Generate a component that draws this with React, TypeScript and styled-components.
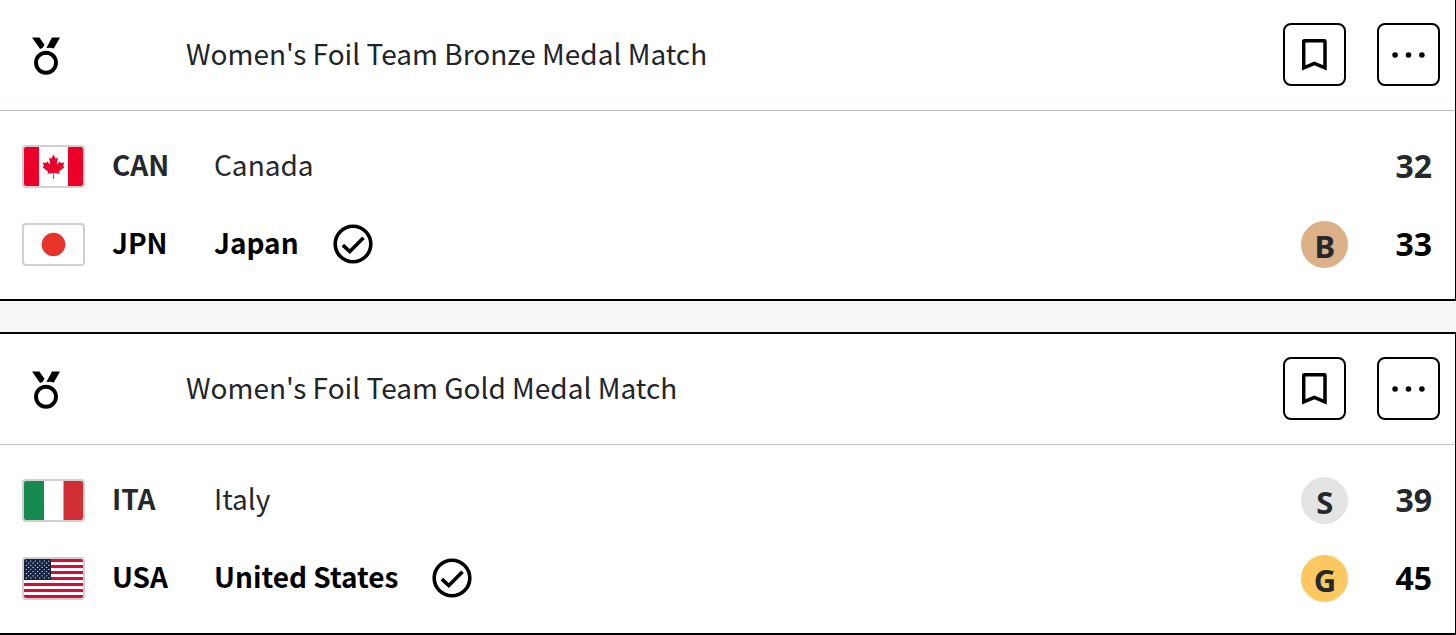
import React from "react";
import styled, { createGlobalStyle } from "styled-components";

const GlobalStyle = createGlobalStyle`
  *, *::before, *::after { box-sizing: border-box; }
  body {
    margin: 0;
    background: #f7f7f7;
    color: #212529;
    font-family: "Noto Sans CJK SC", "Noto Sans", sans-serif;
    font-size: 28px;
    line-height: 40px;
  }
`;

const Schedule = styled.main`
  display: flex;
  flex-direction: column;
  gap: 31px;
`;

const Card = styled.article<{ $continued?: boolean }>`
  background: #fff;
  border: solid #000;
  border-width: ${(p) => (p.$continued ? "0" : "2px")} 1px 2px 0;
`;

const CardHeader = styled.header`
  display: flex;
  align-items: center;
  padding: 23px 15px 24px 32px;
  border-bottom: 1px solid #bcc2c7;
`;

const MedalSlot = styled.span`
  display: flex;
  flex: 0 0 154px;
`;

const Title = styled.h2`
  flex: 1;
  margin: 0;
  padding-bottom: 4px;
  font-size: 28px;
  font-weight: 400;
`;

const Actions = styled.div`
  display: flex;
  gap: 31px;
`;

const IconButton = styled.button`
  display: flex;
  align-items: center;
  justify-content: center;
  width: 63px;
  height: 63px;
  padding: 0;
  border: 2px solid #000;
  border-radius: 8px;
  background: #fff;
  color: #000;
  cursor: pointer;
`;

const Teams = styled.ul`
  margin: 0;
  padding: 16px 23px 16px 22px;
  list-style: none;
`;

const TeamRow = styled.li<{ $winner?: boolean }>`
  display: flex;
  align-items: center;
  height: 78px;
  color: ${(p) => (p.$winner ? "#000" : "#25292d")};
  font-weight: ${(p) => (p.$winner ? 700 : 400)};
`;

const FlagFrame = styled.span`
  display: flex;
  width: 63px;
  height: 43px;
  border: 2px solid #d0d0d0;
  border-radius: 4px;
  overflow: hidden;

  svg {
    width: 100%;
    height: 100%;
  }
`;

const Code = styled.strong`
  width: 102px;
  margin-left: 27px;
  padding-bottom: 4px;
  font-weight: 700;
`;

const Name = styled.span`
  margin-right: 34px;
  padding-bottom: 4px;
`;

const Result = styled.div`
  display: flex;
  align-items: center;
  gap: 47px;
  margin-left: auto;
  font-family: "Noto Sans", sans-serif;
  font-size: 32px;
  font-weight: 700;
`;

const Medal = styled.span<{ $color: string }>`
  display: flex;
  align-items: center;
  justify-content: center;
  width: 47px;
  height: 47px;
  padding-top: 4px;
  border-radius: 50%;
  background: ${(p) => p.$color};
  color: #25292d;
  font-size: 31px;
`;

type Country = "CAN" | "JPN" | "ITA" | "USA";
type MedalKind = "G" | "S" | "B";

interface Team {
  code: Country;
  name: string;
  score: number;
  medal?: MedalKind;
  winner?: boolean;
}

interface Match {
  title: string;
  teams: Team[];
}

const medals: Record<MedalKind, { color: string; label: string }> = {
  G: { color: "#fcc861", label: "Gold" },
  S: { color: "#e4e4e4", label: "Silver" },
  B: { color: "#dcb187", label: "Bronze" },
};

const matches: Match[] = [
  {
    title: "Women's Foil Team Bronze Medal Match",
    teams: [
      { code: "CAN", name: "Canada", score: 32 },
      { code: "JPN", name: "Japan", score: 33, medal: "B", winner: true },
    ],
  },
  {
    title: "Women's Foil Team Gold Medal Match",
    teams: [
      { code: "ITA", name: "Italy", score: 39, medal: "S" },
      { code: "USA", name: "United States", score: 45, medal: "G", winner: true },
    ],
  },
];

const MedalIcon = () => (
  <svg width="28" height="40" viewBox="0 0 28 40" aria-hidden="true">
    <path d="M0 2.6h7.4l5.1 7.2-1.8 2.9-2.6 1.3zM20 2.6H28l-6.2 11-3.4-.8-4 .2z" />
    <circle cx="14" cy="27.7" r="10" fill="none" stroke="#000" strokeWidth="3.9" />
  </svg>
);

const BookmarkIcon = () => (
  <svg width="26" height="34" viewBox="0 0 26 34" aria-hidden="true">
    <path
      d="M1.7 29.9V3.4Q1.7 2.7 2.4 2.7H22.3Q23 2.7 23 3.4V29.9L12.4 25.3Z"
      fill="none"
      stroke="currentColor"
      strokeWidth="3.5"
    />
  </svg>
);

const MoreIcon = () => (
  <svg width="34" height="8" viewBox="0 0 34 8" fill="currentColor" aria-hidden="true">
    <circle cx="3.1" cy="4" r="2.8" />
    <circle cx="16.5" cy="4" r="2.8" />
    <circle cx="29.9" cy="4" r="2.8" />
  </svg>
);

const WinnerIcon = () => (
  <svg width="40" height="40" viewBox="0 0 40 40" fill="none" stroke="#000" role="img" aria-label="Winner">
    <circle cx="20" cy="20" r="17.8" strokeWidth="3.6" />
    <path d="M9.8 21.2 16.8 27.6 30.5 13.7" strokeWidth="3.6" />
  </svg>
);

const Star = ({ x, y }: { x: number; y: number }) => <circle cx={x} cy={y} r=".6" fill="#fff" />;

const stars = Array.from({ length: 9 }, (_, row) =>
  Array.from({ length: row % 2 ? 5 : 6 }, (_, col) => ({
    x: 2.3 + col * 4.5 + (row % 2 ? 2.3 : 0),
    y: 2.1 + row * 2.1,
  })),
).flat();

const flags: Record<Country, React.ReactNode> = {
  CAN: (
    <>
      <path fill="#ec0029" d="M0 0h15v39H0zM44 0h15v39H44z" />
      <path
        fill="#ec0029"
        transform="translate(29.5 19.5) scale(.006)"
        d="m-90 2030 45-863a95 95 0 0 0-111-98l-859 151 116-320a65 65 0 0 0-20-73l-941-762 212-99a65 65 0 0 0 34-79l-186-572 542 115a65 65 0 0 0 73-38l105-247 423 454a65 65 0 0 0 111-57l-204-1052 327 189a65 65 0 0 0 91-27l332-652 332 652a65 65 0 0 0 91 27l327-189-204 1052a65 65 0 0 0 111 57l423-454 105 247a65 65 0 0 0 73 38l542-115-186 572a65 65 0 0 0 34 79l212 99-941 762a65 65 0 0 0-20 73l116 320-859-151a95 95 0 0 0-111 98l45 863z"
      />
    </>
  ),
  JPN: <circle cx="29.5" cy="19.5" r="11.8" fill="#e8332a" />,
  ITA: (
    <>
      <path fill="#178a50" d="M0 0h20v39H0z" />
      <path fill="#d03035" d="M39.5 0H59v39H39.5z" />
    </>
  ),
  USA: (
    <>
      <path d="M0 1.5h59M0 7.5h59M0 13.5h59M0 19.5h59M0 25.5h59M0 31.5h59M0 37.5h59" stroke="#d80c34" strokeWidth="3" />
      <path fill="#14213f" d="M0 0h27v21H0z" />
      {stars.map((s) => (
        <Star key={`${s.x}-${s.y}`} {...s} />
      ))}
    </>
  ),
};

const Flag = ({ code }: { code: Country }) => (
  <FlagFrame>
    <svg viewBox="0 0 59 39" preserveAspectRatio="none" aria-hidden="true">
      {flags[code]}
    </svg>
  </FlagFrame>
);

const MatchCard = ({ match, continued }: { match: Match; continued?: boolean }) => (
  <Card $continued={continued}>
    <CardHeader>
      <MedalSlot>
        <MedalIcon />
      </MedalSlot>
      <Title>{match.title}</Title>
      <Actions>
        <IconButton type="button" aria-label="Bookmark">
          <BookmarkIcon />
        </IconButton>
        <IconButton type="button" aria-label="More options">
          <MoreIcon />
        </IconButton>
      </Actions>
    </CardHeader>
    <Teams>
      {match.teams.map((team) => (
        <TeamRow key={team.code} $winner={team.winner}>
          <Flag code={team.code} />
          <Code>{team.code}</Code>
          <Name>{team.name}</Name>
          {team.winner && <WinnerIcon />}
          <Result>
            {team.medal && (
              <Medal $color={medals[team.medal].color} title={medals[team.medal].label}>
                {team.medal}
              </Medal>
            )}
            <span>{team.score}</span>
          </Result>
        </TeamRow>
      ))}
    </Teams>
  </Card>
);

export default function App() {
  return (
    <>
      <GlobalStyle />
      <Schedule>
        {matches.map((match, i) => (
          <MatchCard key={match.title} match={match} continued={i === 0} />
        ))}
      </Schedule>
    </>
  );
}
